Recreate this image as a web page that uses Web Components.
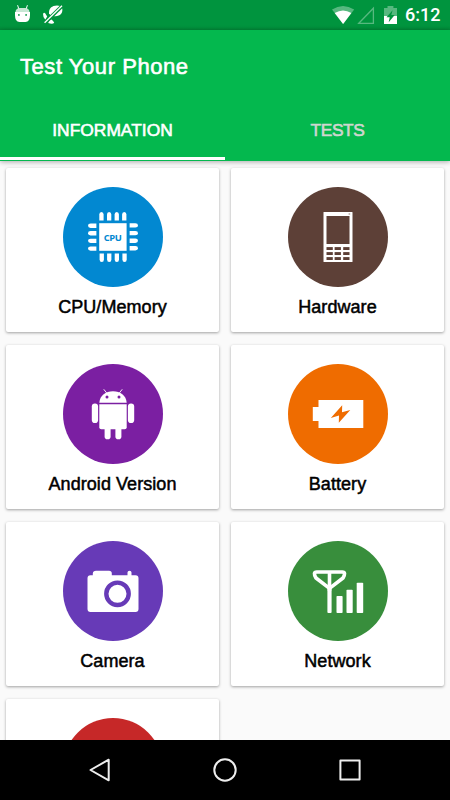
<!DOCTYPE html>
<html lang="en">
<head>
<meta charset="utf-8">
<title>Test Your Phone</title>
<style>
    body {
        margin: 0;
        background: #fafafa;
        font-family: "Liberation Sans", Arial, sans-serif;
    }
</style>
</head>
<body>
<phone-screen>
    <status-bar slot="top" time="6:12"></status-bar>
    <app-header slot="top" heading="Test Your Phone">
        <app-tab active>INFORMATION</app-tab>
        <app-tab style="letter-spacing: -.45px">TESTS</app-tab>
    </app-header>
    <info-card icon="cpu" color="#0288d1">CPU/Memory</info-card>
    <info-card icon="hardware" color="#5d4037">Hardware</info-card>
    <info-card icon="android" color="#7b1fa2">Android Version</info-card>
    <info-card icon="battery" color="#ef6c00">Battery</info-card>
    <info-card icon="camera" color="#673ab7">Camera</info-card>
    <info-card icon="network" color="#388e3c">Network</info-card>
    <info-card icon="blank" color="#c62828"></info-card>
    <nav-bar slot="bottom"></nav-bar>
</phone-screen>

<script>
const pin = 'M0 8.4V2.6Q0 0 2.15 0T4.3 2.6V8.4Z';
const pinOffsets = [36.3, 44, 51.6, 59.1];

// all icons are drawn on a 100x100 circle
const icons = {
    cpu: `
        <rect x="36.2" y="36.2" width="27.4" height="27.6"/>
        ${[0, 90, 180, 270].map(a => `<g transform="rotate(${a} 50 50)">
            ${pinOffsets.map(x => `<path d="${pin}" transform="translate(${x} 25)"/>`).join('')}
        </g>`).join('')}
        <text x="49.8" y="53.9" text-anchor="middle" textLength="18" font-family="Open Sans, Noto Sans, sans-serif" font-weight="700" font-size="9.4" fill="var(--circle)">CPU</text>`,
    hardware: `
        <rect x="35.5" y="25" width="29" height="50" rx=".6"/>
        <g fill="var(--circle)">
            <rect x="38.5" y="29" width="23" height="28"/>
            ${[60.1, 65.1, 70.1].map(y => [38.5, 46.6, 55.2].map(x => `<rect x="${x}" y="${y}" width="6.3" height="2.9"/>`).join('')).join('')}
            <rect x="60.6" y="26.3" width="1.6" height="1.4" opacity=".5"/>
        </g>`,
    android: `
        <path d="M36.3 38.7C36.8 31.4 42.7 27.2 50 27.2S63.2 31.4 63.7 38.7Z"/>
        <path d="M41 25.6 43.7 29M59 25.6 56.3 29" stroke="#fff" stroke-width=".9" stroke-linecap="round"/>
        <circle cx="44" cy="33.1" r="1.5" fill="var(--circle)"/>
        <circle cx="56" cy="33.1" r="1.5" fill="var(--circle)"/>
        <path d="M36.3 40.2H63.7V63.3Q63.7 65.3 61.7 65.3H38.3Q36.3 65.3 36.3 63.3Z"/>
        <rect x="28.8" y="39.4" width="6.3" height="19.6" rx="3.1"/>
        <rect x="64.9" y="39.4" width="6.3" height="19.6" rx="3.1"/>
        <rect x="41.6" y="60" width="6" height="15.2" rx="2.8"/>
        <rect x="52.4" y="60" width="6" height="15.2" rx="2.8"/>`,
    battery: `
        <path d="M30.5 36H75.3V64H30.5V57H24.8V43H30.5Z"/>
        <path d="M54.2 41.3 54 48.2 62.3 45.9 50.8 58.8 51 51.6 42.8 54.1Z" fill="var(--circle)"/>`,
    camera: `
        <path d="M27.5 34.3H29.8V32.5Q30 29.7 33 29.7H46Q48.8 29.7 48.8 32.5V34.3H64.5V31.5Q64.5 29.7 66.5 29.7T68.5 31.5V34.3H72.5Q75.5 34.3 75.5 37.3V68Q75.5 71 72.5 71H27.5Q24.5 71 24.5 68V37.3Q24.5 34.3 27.5 34.3Z"/>
        <circle cx="54.5" cy="52.8" r="11.2" fill="none" stroke="var(--circle)" stroke-width="4.4"/>`,
    network: `
        <path d="M41.5 47.4 28 37Q24.5 31 28.8 31H54.2Q58.5 31 55 37L41.5 47.4" fill="none" stroke="#fff" stroke-width="3.6" stroke-linejoin="round"/>
        <path d="M41.5 31V50" stroke="#fff" stroke-width="3.6"/>
        <rect x="39.4" y="46" width="4.2" height="26" rx="1"/>
        <rect x="48.5" y="55" width="6.1" height="17" rx=".8"/>
        <rect x="58.5" y="48.7" width="6.2" height="23.3" rx=".8"/>
        <rect x="68.7" y="41.7" width="6.5" height="30.3" rx=".8"/>`,
    blank: ''
};

class PhoneScreen extends HTMLElement {
    constructor() {
        super();
        this.attachShadow({ mode: 'open' });
        this.shadowRoot.innerHTML = `
            <style>
                :host {
                    display: flex;
                    flex-direction: column;
                    width: 450px;
                    height: 800px;
                    overflow: hidden;
                }
                main {
                    flex: 1;
                    min-height: 0;
                    overflow: hidden;
                    display: grid;
                    grid-template-columns: 1fr 1fr;
                    grid-auto-rows: 164.5px;
                    gap: 12.5px 12px;
                    padding: 6.5px 6px 0;
                    box-sizing: border-box;
                }
            </style>
            <slot name="top"></slot>
            <main><slot></slot></main>
            <slot name="bottom"></slot>
        `;
    }
}

class StatusBar extends HTMLElement {
    constructor() {
        super();
        this.attachShadow({ mode: 'open' });
        this.shadowRoot.innerHTML = `
            <style>
                :host {
                    display: flex;
                    align-items: center;
                    height: 30px;
                    flex: none;
                    box-sizing: border-box;
                    padding: 0 10px 0 14px;
                    background: linear-gradient(#00943e 26px, #008938 30px);
                    color: #fff;
                }
                svg { display: block; flex: none; fill: #fff; }
                .debug { margin-right: 11px; }
                .wifi { margin-left: auto; }
                .battery { margin: 0 8px 0 9px; }
                span {
                    font: 500 18px/32px Roboto, sans-serif;
                    width: 35px;
                    white-space: nowrap;
                }
            </style>
            <svg class="debug" width="17" height="30" viewBox="0 0 17 30">
                <path d="M3.6 5.2 4.7 8.6M13.4 5.2 12.3 8.6" stroke="#fff" stroke-width="1"/>
                <path d="M1.4 12.5Q1.6 8 6 8H11Q15.4 8 15.6 12.5Z" opacity=".78"/>
                <path d="M1 12H16V15Q16 22 11.5 22H5.5Q1 22 1 15Z"/>
                <circle cx="4.9" cy="14.9" r=".9" fill="#00943e"/>
                <circle cx="12.1" cy="14.9" r=".9" fill="#00943e"/>
            </svg>
            <svg width="22" height="30" viewBox="42 0 22 30">
                <path d="M49 13.6C48.6 8.3 52 5.6 57 5.5L60.5 6 62.3 8.8C62.8 13 60.5 16.3 55 16.2L51.3 16Z"/>
                <path d="M43 13.8Q44 11.9 45.3 13.4L47.2 16.6 45.3 19.8Q43 18 43 13.8Z"/>
                <path d="M49 20.3 51.7 19.6 54.2 22.5Q53.2 24.5 48.2 23.1Z"/>
                <path d="M45.2 22.6 62.3 5.8" stroke="#00943e" stroke-width="3.6"/>
                <path d="M44.6 22.8 62 5.8" stroke="#fff" stroke-width="1.3"/>
            </svg>
            <svg class="wifi" width="24" height="30" viewBox="331 0 24 30">
                <path d="M332 9.6Q343 2.6 354.2 9.6L343.1 24Z" opacity=".34"/>
                <path d="M334.7 13.1Q343 7.7 351.4 13.1L343.1 23.9Z"/>
            </svg>
            <svg width="20" height="30" viewBox="355 0 20 30">
                <path d="M358.8 23.3 373.4 8.2V23.3Z" fill="none" stroke="#fff" stroke-width="1.3" opacity=".34"/>
            </svg>
            <svg class="battery" width="13" height="30" viewBox="384 0 13 30">
                <path d="M384 8H387.5V6H393.4V8H397V16H384Z" opacity=".34"/>
                <path d="M384 16H397V24H384Z"/>
                <path d="M392.6 10.3 386.5 17.3H389.7L388.7 22.2 394.7 15H391.3Z" fill="#00943e"/>
            </svg>
            <span></span>
        `;
    }
    connectedCallback() {
        this.shadowRoot.querySelector('span').textContent = this.getAttribute('time');
    }
}

class AppHeader extends HTMLElement {
    constructor() {
        super();
        this.attachShadow({ mode: 'open' });
        this.shadowRoot.innerHTML = `
            <style>
                :host {
                    display: flex;
                    flex-direction: column;
                    flex: none;
                    height: 131px;
                    background: #04b84e;
                    color: #fff;
                    box-shadow: 0 1px 5px rgba(0, 0, 0, .32);
                    z-index: 1;
                }
                h1 {
                    margin: 0;
                    padding: 0 20px;
                    font-size: 22px;
                    font-weight: 400;
                    line-height: 73px;
                    height: 70px;
                    letter-spacing: .56px;
                    -webkit-text-stroke: .6px;
                }
                nav { display: flex; height: 60px; }
            </style>
            <h1></h1>
            <nav><slot></slot></nav>
        `;
    }
    connectedCallback() {
        this.shadowRoot.querySelector('h1').textContent = this.getAttribute('heading');
    }
}

class AppTab extends HTMLElement {
    constructor() {
        super();
        this.attachShadow({ mode: 'open' });
        this.shadowRoot.innerHTML = `
            <style>
                :host {
                    display: block;
                    flex: 1;
                    box-sizing: border-box;
                    height: 60px;
                    text-align: center;
                    font-size: 17.4px;
                    line-height: 61px;
                    color: #cfd6cf;
                    -webkit-text-stroke: .6px;
                    border-bottom: 3px solid transparent;
                }
                :host([active]) {
                    color: #fff;
                    border-color: #fff;
                }
            </style>
            <slot></slot>
        `;
    }
}

class InfoCard extends HTMLElement {
    constructor() {
        super();
        this.attachShadow({ mode: 'open' });
        this.shadowRoot.innerHTML = `
            <style>
                :host {
                    display: flex;
                    flex-direction: column;
                    align-items: center;
                    box-sizing: border-box;
                    padding-top: 19.5px;
                    background: #fff;
                    border-radius: 2px;
                    box-shadow: 0 1px 3px rgba(0, 0, 0, .36);
                }
                svg { display: block; flex: none; fill: #fff; }
                .label {
                    font-size: 18px;
                    line-height: 40px;
                    color: #000;
                    letter-spacing: .06px;
                    -webkit-text-stroke: .5px;
                }
            </style>
            <svg width="100" height="100" viewBox="0 0 100 100"></svg>
            <div class="label"><slot></slot></div>
        `;
    }
    connectedCallback() {
        this.style.setProperty('--circle', this.getAttribute('color'));
        this.shadowRoot.querySelector('svg').innerHTML =
            '<circle cx="50" cy="50" r="50" fill="var(--circle)"/>' + icons[this.getAttribute('icon')];
    }
}

class NavBar extends HTMLElement {
    constructor() {
        super();
        this.attachShadow({ mode: 'open' });
        this.shadowRoot.innerHTML = `
            <style>
                :host {
                    display: flex;
                    justify-content: center;
                    align-items: center;
                    gap: 101px;
                    height: 60px;
                    flex: none;
                    background: #000;
                    z-index: 1;
                }
                svg { fill: none; stroke: #eee; stroke-width: 2; stroke-linejoin: round; }
            </style>
            <svg width="24" height="24"><path d="M2.5 12 20.7 1.7V22.3Z"/></svg>
            <svg width="24" height="24"><circle cx="12" cy="12" r="10.7"/></svg>
            <svg width="24" height="24"><rect x="2.4" y="2.4" width="19.2" height="19.2"/></svg>
        `;
    }
}

customElements.define('phone-screen', PhoneScreen);
customElements.define('status-bar', StatusBar);
customElements.define('app-header', AppHeader);
customElements.define('app-tab', AppTab);
customElements.define('info-card', InfoCard);
customElements.define('nav-bar', NavBar);
</script>
</body>
</html>
